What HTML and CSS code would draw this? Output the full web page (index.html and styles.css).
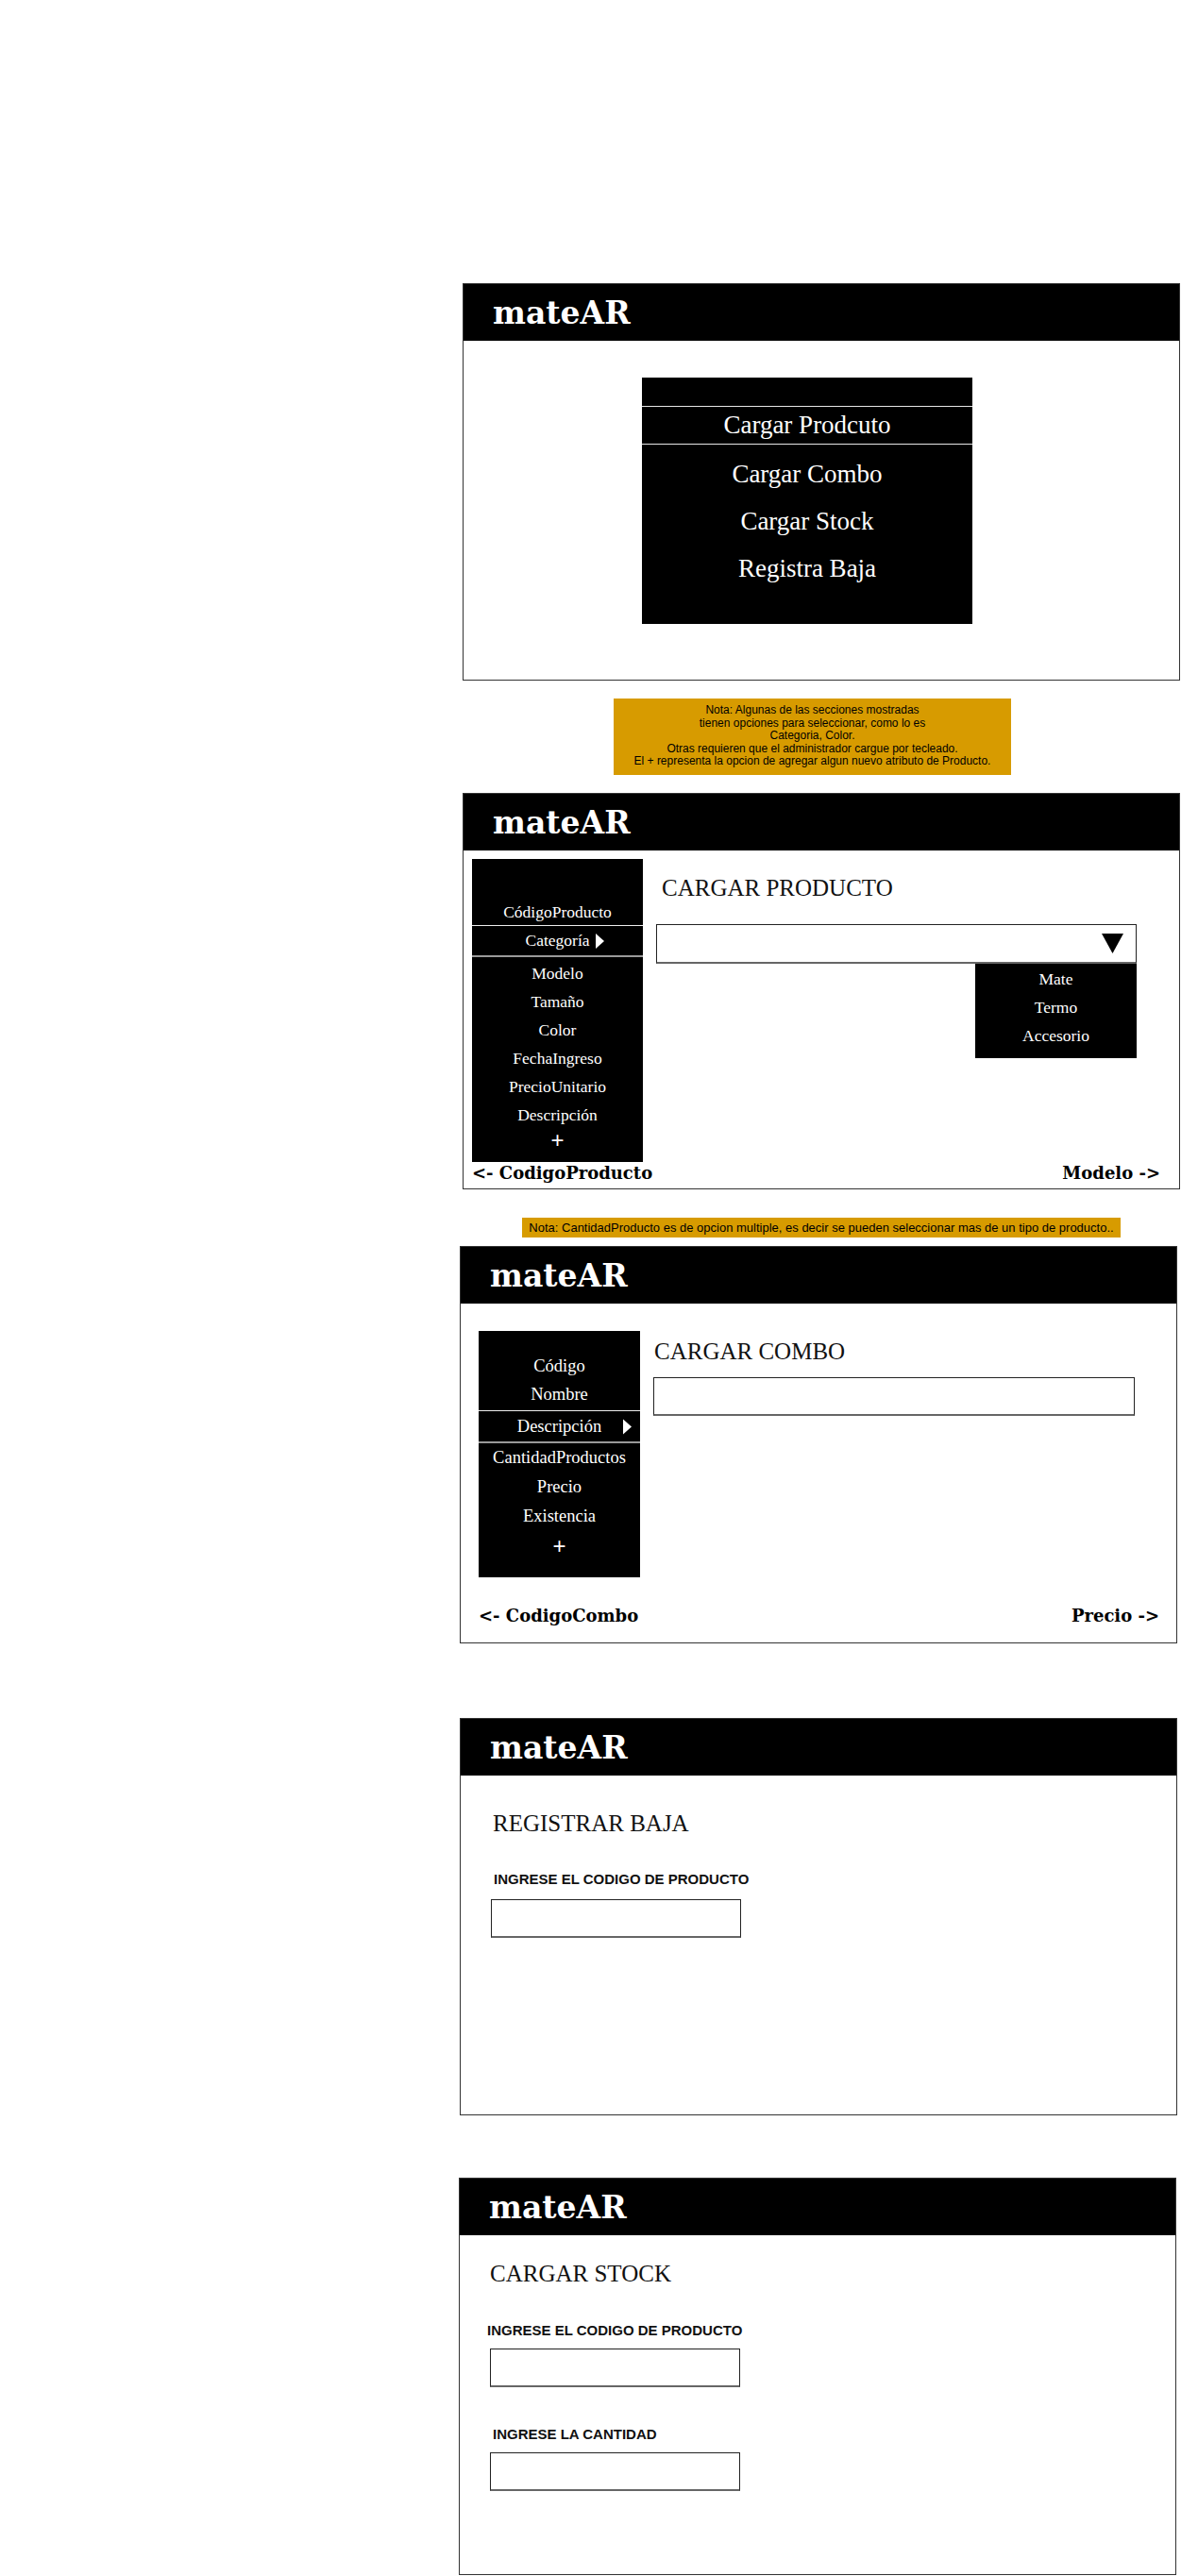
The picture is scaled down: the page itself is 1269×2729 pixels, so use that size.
FILE: index.html
```html
<!DOCTYPE html>
<html>
<head>
  <meta charset="utf-8">
  <title>mateAR - Administrador</title>
  <link rel="stylesheet" href="styles.css">
</head>
<body>
  <main class="page">

    <!-- Menu principal -->
    <section class="frame home">
      <div class="frame-head"><span class="brand">mateAR</span></div>
      <div class="frame-body">
        <ul class="main-menu">
          <li class="current">Cargar Prodcuto</li>
          <li>Cargar Combo</li>
          <li>Cargar Stock</li>
          <li>Registra Baja</li>
        </ul>
      </div>
    </section>

    <p class="note note-main">Nota: Algunas de las secciones mostradas<br>tienen opciones para seleccionar, como lo es<br>Categoria, Color.<br>Otras requieren que el administrador cargue por tecleado.<br>El + representa la opcion de agregar algun nuevo atributo de Producto.</p>

    <!-- Cargar producto -->
    <section class="frame producto">
      <div class="frame-head"><span class="brand">mateAR</span></div>
      <div class="frame-body">
        <div class="split">
          <ul class="side-menu">
            <li class="first">CódigoProducto</li>
            <li class="current">Categoría
              <svg class="arrow" viewBox="0 0 9 16"><polygon points="0,0 9,8 0,16" fill="#fff"/></svg>
            </li>
            <li>Modelo</li>
            <li>Tamaño</li>
            <li>Color</li>
            <li>FechaIngreso</li>
            <li>PrecioUnitario</li>
            <li>Descripción</li>
            <li class="add">+</li>
          </ul>
          <div class="content">
            <h2 class="title">CARGAR PRODUCTO</h2>
            <div class="field select">
              <svg class="caret" viewBox="0 0 23 21"><polygon points="0,0 23,0 11.5,21" fill="#000"/></svg>
            </div>
            <ul class="options">
              <li>Mate</li>
              <li>Termo</li>
              <li>Accesorio</li>
            </ul>
          </div>
        </div>
        <div class="steps"><span>&lt;- CodigoProducto</span><span>Modelo -&gt;</span></div>
      </div>
    </section>

    <p class="note note-combo">Nota: CantidadProducto es de opcion multiple, es decir se pueden seleccionar mas de un tipo de producto..</p>

    <!-- Cargar combo -->
    <section class="frame combo">
      <div class="frame-head"><span class="brand">mateAR</span></div>
      <div class="frame-body">
        <div class="split">
          <ul class="side-menu">
            <li>Código</li>
            <li>Nombre</li>
            <li class="current">Descripción
              <svg class="arrow" viewBox="0 0 9 16"><polygon points="0,0 9,8 0,16" fill="#fff"/></svg>
            </li>
            <li>CantidadProductos</li>
            <li>Precio</li>
            <li>Existencia</li>
            <li class="add">+</li>
          </ul>
          <div class="content">
            <h2 class="title">CARGAR COMBO</h2>
            <input class="field" type="text">
          </div>
        </div>
        <div class="steps"><span>&lt;- CodigoCombo</span><span>Precio -&gt;</span></div>
      </div>
    </section>

    <!-- Registrar baja -->
    <section class="frame baja">
      <div class="frame-head"><span class="brand">mateAR</span></div>
      <div class="frame-body">
        <h2 class="title">REGISTRAR BAJA</h2>
        <p class="label">INGRESE EL CODIGO DE PRODUCTO</p>
        <input class="field short" type="text">
      </div>
    </section>

    <!-- Cargar stock -->
    <section class="frame stock">
      <div class="frame-head"><span class="brand">mateAR</span></div>
      <div class="frame-body">
        <h2 class="title">CARGAR STOCK</h2>
        <p class="label">INGRESE EL CODIGO DE PRODUCTO</p>
        <input class="field short" type="text">
        <p class="label qty">INGRESE LA CANTIDAD</p>
        <input class="field short" type="text">
      </div>
    </section>

  </main>
</body>
</html>
```

FILE: styles.css
```css
body {
  margin: 0;
  background: #fff;
  color: #000;
  font-family: "Liberation Serif", "Times New Roman", serif;
}

.page {
  padding: 300px 0 0 486px;
}

/* pantallas */
.frame {
  width: 760px;
  height: 421px;
  box-sizing: border-box;
  border: 1px solid #333;
  display: flex;
  flex-direction: column;
}
.home,
.producto {
  margin-left: 4px;
}
.combo,
.baja {
  margin-left: 1px;
}
.producto {
  height: 420px;
}
.baja {
  margin-top: 79px;
}
.stock {
  margin-top: 66px;
}

.frame-head {
  height: 60px;
  flex-shrink: 0;
  background: #000;
  display: flex;
  align-items: center;
  padding-left: 31px;
}
.brand {
  font-family: "DejaVu Serif", Georgia, serif;
  font-weight: bold;
  font-size: 33px;
  color: #fff;
}
.frame-body {
  flex: 1;
}

/* menu principal */
.home .frame-body {
  padding: 39px 0 0 189px;
}
.main-menu {
  list-style: none;
  margin: 0;
  padding: 30px 0 34px;
  width: 350px;
  background: #000;
  color: #fff;
  text-align: center;
  font-size: 27px;
}
.main-menu li {
  height: 50px;
  line-height: 50px;
}
.main-menu li.current {
  height: 39px;
  line-height: 39px;
  border-top: 1px solid #e6e6e6;
  border-bottom: 1px solid #e6e6e6;
  margin-bottom: 6px;
}

/* notas */
.note {
  margin: 0;
  background: #d79b00;
  color: #000;
  font-family: "Liberation Sans", Arial, sans-serif;
  text-align: center;
  box-sizing: border-box;
}
.note-main {
  margin: 19px 0 19px 164px;
  width: 421px;
  height: 81px;
  padding: 6px 0 7px;
  font-size: 12px;
  line-height: 13.5px;
}
.note-combo {
  margin: 30px 0 9px 67px;
  width: 634px;
  height: 21px;
  line-height: 21px;
  font-size: 13px;
  white-space: nowrap;
}

/* barra lateral + formulario */
.split {
  display: flex;
  align-items: flex-start;
}
.side-menu {
  list-style: none;
  margin: 0;
  flex-shrink: 0;
  box-sizing: border-box;
  background: #000;
  color: #fff;
  text-align: center;
  font-size: 17.5px;
}
.side-menu li {
  height: 30px;
  line-height: 30px;
  position: relative;
}
.side-menu li.current {
  border-top: 1px solid #eee;
  border-bottom: 2px solid #999;
}
.side-menu .add {
  font-family: "Liberation Sans", Arial, sans-serif;
  font-size: 24px;
}
.arrow {
  position: absolute;
  top: 50%;
  width: 9px;
  height: 16px;
  margin-top: -8px;
}

.producto .frame-body {
  padding: 9px 20px 0 9px;
}
.producto .side-menu {
  width: 181px;
  height: 321px;
  padding: 43px 0 11px;
}
.producto .side-menu .first {
  height: 27px;
  line-height: 27px;
}
.producto .side-menu .current {
  height: 31px;
  line-height: 31px;
  margin-bottom: 2px;
}
.producto .side-menu .add {
  height: 24px;
  line-height: 24px;
}
.producto .arrow {
  right: 41px;
}

.combo .frame-body {
  padding: 29px 18px 0 19px;
}
.combo .side-menu {
  width: 171px;
  height: 261px;
  padding: 22px 0 18px;
  font-size: 18.5px;
}
.combo .side-menu .add {
  font-size: 24px;
}
.combo .side-menu .current {
  margin-top: 2px;
  height: 32px;
  line-height: 32px;
}
.combo .side-menu .current ~ li {
  height: 31px;
  line-height: 31px;
}
.combo .arrow {
  right: 9px;
  height: 17px;
}

.content {
  flex: 1;
  display: flex;
  flex-direction: column;
}
.producto .content {
  margin: 0 25px 0 14px;
}
.combo .content {
  margin: 0 26px 0 14px;
}

.title {
  margin: 0;
  font-weight: normal;
  font-size: 25px;
  line-height: 30px;
  color: #111;
}
.producto .title {
  margin-top: 16px;
  padding-left: 6px;
}
.combo .title {
  margin-top: 7px;
  padding-left: 1px;
}

.field {
  display: block;
  height: 41px;
  margin: 0;
  padding: 0;
  box-sizing: border-box;
  border: 1px solid #222;
  border-bottom: 2px solid #666;
  background: #fff;
}
.select {
  height: 42px;
  margin-top: 23px;
  display: flex;
  align-items: center;
  justify-content: flex-end;
  padding-right: 13px;
}
.caret {
  width: 23px;
  height: 21px;
}
.combo .field {
  margin-top: 12px;
}
.options {
  list-style: none;
  margin: 0;
  padding: 1px 0 9px;
  align-self: flex-end;
  width: 171px;
  background: #000;
  color: #fff;
  text-align: center;
  font-size: 17.5px;
}
.options li {
  height: 30px;
  line-height: 30px;
}

.steps {
  display: flex;
  justify-content: space-between;
  font-family: "DejaVu Serif", Georgia, serif;
  font-weight: bold;
  font-size: 18px;
  line-height: 24px;
}
.combo .steps {
  margin-top: 29px;
}

/* formularios simples */
.label {
  margin: 0;
  font-family: "Liberation Sans", Arial, sans-serif;
  font-weight: bold;
  font-size: 15px;
  line-height: 18px;
  color: #111;
}
.short {
  width: 265px;
}

.baja .frame-body {
  padding: 36px 0 0 32px;
}
.baja .title {
  padding-left: 2px;
}
.baja .label {
  margin-top: 35px;
  padding-left: 3px;
}
.baja .field {
  margin-top: 12px;
}

.stock .frame-body {
  padding: 26px 0 0 29px;
}
.stock .title {
  padding-left: 3px;
}
.stock .label {
  margin-top: 36px;
}
.stock .label.qty {
  margin-top: 41px;
  padding-left: 6px;
}
.stock .field {
  margin-top: 10px;
  margin-left: 3px;
}
```
